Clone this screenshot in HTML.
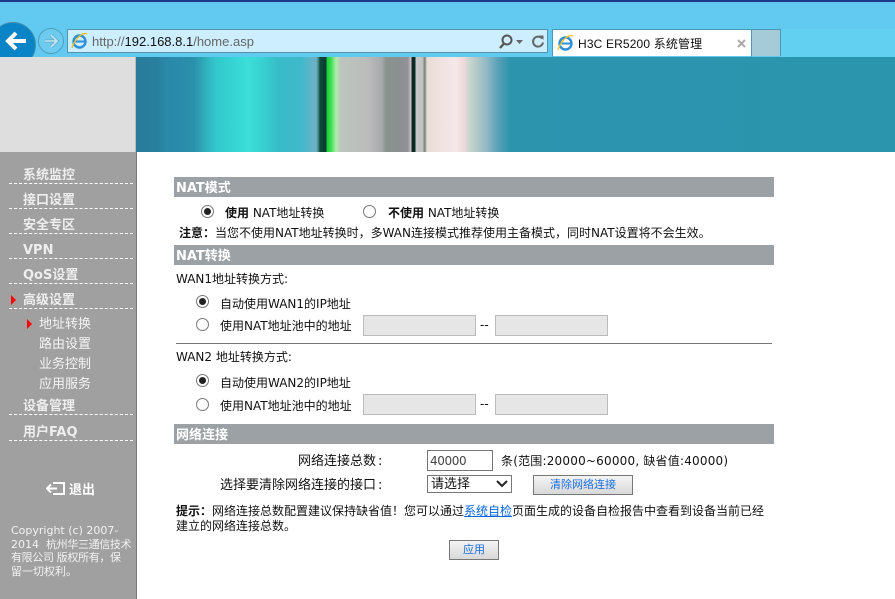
<!DOCTYPE html>
<html lang="zh-CN"><head><meta charset="utf-8"><title>H3C ER5200 系统管理</title>
<style>
html,body{margin:0;padding:0;width:895px;height:599px;overflow:hidden;background:#fff}
body{position:relative;font:12px "DejaVu Sans","WenQuanYi Zen Hei","Noto Sans CJK SC",sans-serif;color:#111}
.a{position:absolute;white-space:nowrap;line-height:16px}
.b{position:absolute;left:174px;width:600px;height:20px;background:#9ba1a4;color:#fff;font-weight:bold;font-size:13px;line-height:23px;text-indent:2px;overflow:hidden}
.m{position:absolute;left:9px;width:124px;height:19px;border-bottom:1px dashed #fff;color:#eee;font-weight:bold;font-size:13px;line-height:23px;text-indent:14px}
.s{position:absolute;left:39px;color:#f4f4f4;font-size:13px;line-height:16px;white-space:nowrap}
.r{position:absolute;width:11px;height:11px;border:1px solid #777;border-radius:50%;background:#fff;box-sizing:content-box}
.r.on::after{content:"";position:absolute;left:2px;top:2px;width:7px;height:7px;border-radius:50%;background:#222}
.i{position:absolute;width:111px;height:19px;background:#e6e6e6;border:1px solid #bbb}
.btn{position:absolute;box-sizing:border-box;border:1px solid #777;background:linear-gradient(#f4f4f4,#d8d8d8);color:#1a6fe0;font-size:11px;text-align:center;line-height:18px}
.t{position:absolute;width:0;height:0;border-left:5px solid #f00;border-top:5px solid transparent;border-bottom:5px solid transparent}
</style></head><body>
<!-- browser chrome -->
<div style="position:absolute;left:0;top:0;width:895px;height:57px;background:#62caf1"></div>
<div style="position:absolute;left:781px;top:29px;width:114px;height:28px;background:#62d0f0"></div>
<div style="position:absolute;left:0;top:0;width:895px;height:2px;background:#1d3a8a"></div>
<div style="position:absolute;left:-10px;top:22px;width:44px;height:44px;border-radius:50%;background:#0a84c6;border:1px solid #3f8fb0;clip-path:inset(0 0 10px 0)"></div>
<svg style="position:absolute;left:4px;top:30px" width="24" height="22" viewBox="0 0 24 22"><path d="M12 3L4 11l8 8M4 11h18" fill="none" stroke="#fff" stroke-width="4"/></svg>
<div style="position:absolute;left:38px;top:28px;width:24px;height:24px;border-radius:50%;border:1px solid #4f9fbe;background:#6ccbef"></div>
<svg style="position:absolute;left:43px;top:33px" width="16" height="16" viewBox="0 0 16 16"><path d="M8 2l6 6-6 6M14 8H2" fill="none" stroke="#5fa4c0" stroke-width="3"/><path d="M8 2l6 6-6 6M14 8H2" fill="none" stroke="#c8e8f2" stroke-width="1.600"/></svg>
<div style="position:absolute;left:67px;top:29px;width:481px;height:24px;box-sizing:border-box;background:#cdeefe;border:1px solid #5494ad"></div>
<svg style="position:absolute;left:71px;top:32px" width="18" height="18" viewBox="0 0 18 18"><circle cx="8.500" cy="9.500" r="6" fill="none" stroke="#2f8fd8" stroke-width="2.400"/><path d="M3 9.500h11" stroke="#2f8fd8" stroke-width="2"/><path d="M16 2C12 0 4 6 1 16" fill="none" stroke="#f2c21a" stroke-width="1.300"/></svg>
<div class="a" style="left:92px;top:34px;font-family:'Liberation Sans',sans-serif;font-size:13px;color:#666">http://<span style="color:#111">192.168.8.1</span>/home.asp</div>
<svg style="position:absolute;left:498px;top:34px" width="48" height="16" viewBox="0 0 48 16"><circle cx="9" cy="6" r="4.500" fill="none" stroke="#555" stroke-width="2"/><path d="M6 9.500L2 14" stroke="#555" stroke-width="2.400"/><path d="M18 6h7l-3.500 4z" fill="#666"/><path d="M44 4.500a5 5 0 1 0 1 4" fill="none" stroke="#666" stroke-width="2"/><path d="M41 1.500l4.500 0v4.500z" fill="#666"/></svg>
<div style="position:absolute;left:552px;top:29px;width:200px;height:28px;box-sizing:border-box;background:#fff;border:1px solid #4b97b4;border-bottom:1px solid #62caf1"></div>
<div style="position:absolute;left:751px;top:29px;width:30px;height:27px;box-sizing:border-box;background:#a6cbd8;border:1px solid #4b97b4;border-bottom:0"></div>
<svg style="position:absolute;left:557px;top:34px" width="18" height="18" viewBox="0 0 18 18"><circle cx="8.500" cy="9.500" r="6" fill="none" stroke="#2f8fd8" stroke-width="2.400"/><path d="M3 9.500h11" stroke="#2f8fd8" stroke-width="2"/><path d="M16 2C12 0 4 6 1 16" fill="none" stroke="#f2c21a" stroke-width="1.300"/></svg>
<div class="a" style="left:578px;top:36px;color:#111;font-family:'Liberation Sans','WenQuanYi Zen Hei',sans-serif;font-size:12px;letter-spacing:.15px">H3C ER5200 系统管理</div>
<svg style="position:absolute;left:736px;top:38px" width="11" height="11" viewBox="0 0 11 11"><path d="M2 2l7 7M9 2l-7 7" stroke="#aaa" stroke-width="2"/></svg>
<!-- banner -->
<div style="position:absolute;left:0;top:57px;width:135px;height:95px;background:#dedede;border-right:1px solid #bbb"></div>
<div style="position:absolute;left:136px;top:57px;width:759px;height:95px;background:linear-gradient(90deg,#287c9b 0,#2a7f9e 20px,#2a88a8 30px,#2a90ac 58px,#30b0bc 70px,#32c8cc 80px,#36d6d4 100px,#3cdfd9 112px,#36cdd0 130px,#38bcc8 142px,#3fb9cb 165px,#70b0c4 180px,#4a8f90 182px,#0e4a3c 184px,#0a3a30 190px,#18cf3e 191px,#3be050 195px,#b0ecaa 200px,#bcc4bc 205px,#bcbcbc 232px,#a9a9ad 246px,#8a928e 250px,#8a9090 264px,#95929a 272px,#d0c4c4 275px,#0a2a22 276px,#0a2a22 279px,#c8c8c8 280px,#c0c0c0 287px,#7f8a80 288px,#7f8a80 289px,#e8dcd8 291px,#f6e8e8 319px,#ecd8d8 329px,#d8d8d8 331px,#c8d4cc 334px,#90b8c4 351px,#5ea2b8 361px,#2d94ae 374px,#2a95ad 759px)"></div>
<!-- sidebar -->
<div style="position:absolute;left:0;top:152px;width:136px;height:447px;background:#a0a0a0;border-right:1px solid #777"></div>
<div class="m" style="top:164px">系统监控</div>
<div class="m" style="top:189px">接口设置</div>
<div class="m" style="top:214px">安全专区</div>
<div class="m" style="top:239px">VPN</div>
<div class="m" style="top:264px">QoS设置</div>
<div class="m" style="top:289px">高级设置</div>
<div class="t" style="left:11px;top:295px"></div>
<div class="t" style="left:27px;top:319px"></div>
<div class="s" style="top:317px">地址转换</div>
<div class="s" style="top:337px">路由设置</div>
<div class="s" style="top:357px">业务控制</div>
<div class="s" style="top:377px">应用服务</div>
<div class="m" style="top:395px">设备管理</div>
<div class="m" style="top:421px">用户FAQ</div>
<svg style="position:absolute;left:46px;top:481px" width="20" height="15" viewBox="0 0 20 15"><path d="M7 2h11v11H7M1 7.500h10M5 3.500l-4 4 4 4" fill="none" stroke="#fff" stroke-width="2"/></svg>
<div class="a" style="left:69px;top:483px;color:#fff;font-weight:bold;font-size:13px">退出</div>
<div class="a" style="left:11px;top:524px;color:#f2f2f2;font-size:11px;line-height:13.500px;width:126px;white-space:normal">Copyright (c) 2007-<br>2014 &nbsp;<span style="letter-spacing:-.35px">杭州华三通信技术</span><br><span style="letter-spacing:-.35px">有限公司 版权所有，保</span><br>留一切权利。</div>
<!-- content -->
<div class="b" style="top:177px">NAT模式</div>
<div class="r on" style="left:201px;top:205px"></div>
<div class="a" style="left:225px;top:205px"><b>使用</b> NAT地址转换</div>
<div class="r" style="left:363px;top:205px"></div>
<div class="a" style="left:388px;top:205px"><b>不使用</b> NAT地址转换</div>
<div class="a" style="left:179px;top:225px"><b>注意：</b>当您不使用NAT地址转换时，多WAN连接模式推荐使用主备模式，同时NAT设置将不会生效。</div>
<div class="b" style="top:245px">NAT转换</div>
<div class="a" style="left:176px;top:271px">WAN1地址转换方式:</div>
<div class="r on" style="left:196px;top:295px"></div>
<div class="a" style="left:220px;top:296px">自动使用WAN1的IP地址</div>
<div class="r" style="left:196px;top:318px"></div>
<div class="a" style="left:220px;top:318px">使用NAT地址池中的地址</div>
<div class="i" style="left:363px;top:315px"></div>
<div class="a" style="left:480px;top:317px">--</div>
<div class="i" style="left:495px;top:315px"></div>
<div style="position:absolute;left:176px;top:343px;width:596px;height:1px;background:#777"></div>
<div class="a" style="left:176px;top:349px">WAN2 地址转换方式:</div>
<div class="r on" style="left:196px;top:374px"></div>
<div class="a" style="left:220px;top:375px">自动使用WAN2的IP地址</div>
<div class="r" style="left:196px;top:398px"></div>
<div class="a" style="left:220px;top:398px">使用NAT地址池中的地址</div>
<div class="i" style="left:363px;top:394px"></div>
<div class="a" style="left:480px;top:396px">--</div>
<div class="i" style="left:495px;top:394px"></div>
<div class="b" style="top:424px">网络连接</div>
<div class="a" style="left:298px;top:454px;font-size:13px">网络连接总数<span style="margin-left:2px">:</span></div>
<div style="position:absolute;left:427px;top:450px;width:64px;height:19px;border:1px solid #777"></div>
<div class="a" style="left:430px;top:453px;color:#444;letter-spacing:-.4px">40000</div>
<div class="a" style="left:501px;top:453px;letter-spacing:.2px">条(范围:20000~60000, 缺省值:40000)</div>
<div class="a" style="left:220px;top:478px;font-size:13px">选择要清除网络连接的接口<span style="margin-left:2px">:</span></div>
<div style="position:absolute;left:427px;top:475px;width:83px;height:16px;border:1px solid #777"></div>
<div class="a" style="left:431px;top:477px;font-size:13px">请选择</div>
<svg style="position:absolute;left:496px;top:480px" width="12" height="8" viewBox="0 0 12 8"><path d="M1 1l5 5 5-5" fill="none" stroke="#222" stroke-width="2"/></svg>
<div class="btn" style="left:533px;top:475px;width:100px;height:20px">清除网络连接</div>
<div class="a" style="left:176px;top:503px"><b>提示：</b>网络连接总数配置建议保持缺省值！您可以通过<span style="color:#0a66e0;text-decoration:underline">系统自检</span>页面生成的设备自检报告中查看到设备当前已经</div>
<div class="a" style="left:176px;top:518px">建立的网络连接总数。</div>
<div class="btn" style="left:449px;top:540px;width:50px;height:20px">应用</div>
</body></html>
